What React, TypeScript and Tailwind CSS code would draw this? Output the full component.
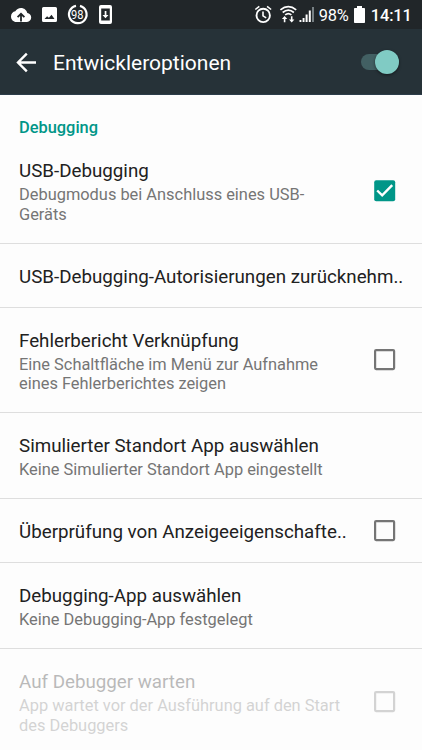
import React from "react";

function CheckBox({ checked = false }: { checked?: boolean }) {
  if (checked) {
    return (
      <svg width="22" height="22" viewBox="0 0 22 22" className="shrink-0">
        <rect x="0.2" y="0.2" width="21" height="21" rx="2" fill="#009688" />
        <path d="M3.2 10.5 L8.2 15.3 L18.2 5.2" fill="none" stroke="#fff" strokeWidth="2.4" />
      </svg>
    );
  }
  return (
    <svg width="22" height="22" viewBox="0 0 22 22" className="shrink-0">
      <rect x="1.1" y="1.1" width="19" height="19" rx="1" fill="none" stroke="#757575" strokeWidth="2.2" />
    </svg>
  );
}

type RowProps = {
  height: string;
  title: string;
  lines?: string[];
  box?: "on" | "off";
  disabled?: boolean;
  last?: boolean;
};

function Row({ height, title, lines = [], box, disabled, last }: RowProps) {
  return (
    <div className={`${height} shrink-0 flex items-center pl-[19px] pr-[26px] ${last ? "" : "border-b border-[#dedede]"}`}>
      <div className={`flex-1 min-w-0 whitespace-nowrap ${disabled ? "opacity-30" : ""} ${lines.length ? "" : "pt-[2px]"}`}>
        <div className="text-[18.75px] leading-[22px] text-[#212121]">{title}</div>
        <div className={lines.length ? "mt-[3px] -mb-[3px]" : ""}>
          {lines.map((l) => (
            <div key={l} className="text-[16.4px] leading-[19.3px] text-[#757575]">{l}</div>
          ))}
        </div>
      </div>
      {box && (
        <div className={disabled ? "opacity-30" : ""}>
          <CheckBox checked={box === "on"} />
        </div>
      )}
    </div>
  );
}

function StatusBar() {
  return (
    <div className="h-[29px] shrink-0 bg-[#212629] flex items-center text-white whitespace-nowrap">
      <svg width="422" height="29" viewBox="0 0 422 29" fill="#fff">
        <path d="M27.3 13.1C26.7 10 24.1 7.9 21 7.9c-2.500 0-4.600 1.300-5.700 3.400C12.900 11.700 11 13.900 11 16.500 11 19.500 13.400 22 16.300 22H27c2.400 0 4.200-2 4.200-4.400 0-2.400-1.700-4.300-3.900-4.500z" />
        <path d="M21 21.500V14.500M17.600 17.200L21 13.800l3.400 3.400" fill="none" stroke="#212629" strokeWidth="1.8" />
        <path fillRule="evenodd" d="M43.500 7h12q1.500 0 1.500 1.500v12q0 1.500-1.500 1.500h-12q-1.500 0-1.500-1.500v-12q0-1.500 1.500-1.500zM44.500 19h10l-3-4.200-2.600 3-1.800-1.600z" />
        <path d="M80 5.900A8.800 8.800 0 1 1 76 5.800" fill="none" stroke="#fff" strokeWidth="2.200" />
        <text x="77.300" y="18.900" fontSize="12.500" textAnchor="middle" textLength="12.500" lengthAdjust="spacingAndGlyphs" fontFamily="Roboto, sans-serif">98</text>
        <path fillRule="evenodd" d="M101 5h9q2 0 2 2v15q0 2-2 2h-9q-2 0-2-2v-15q0-2 2-2zM101.200 8.500v12h8.600v-12z" />
        <path d="M104.700 11h1.700v4h2.100l-3 3.200-3-3.200h2.200z" />
        <circle cx="263.200" cy="15.400" r="6.700" fill="none" stroke="#fff" strokeWidth="1.900" />
        <path d="M255.300 9.500l4-3.200M271.100 9.500l-4-3.200M263 11.400v4.500l3.200 2" fill="none" stroke="#fff" strokeWidth="1.600" />
        <path d="M280.400 9.900Q288.300 3.400 296.200 9.900M282.700 12.500Q288.300 7.900 293.900 12.500M285.200 14.900Q288.300 12.300 291.400 14.900" fill="none" stroke="#fff" strokeWidth="1.700" />
        <path d="M284.600 16l2.700 3h-1.900v3.200h-1.600V19h-1.900zM291.700 22.500l-2.700-3h1.900v-3.200h1.600v3.200h1.900z" />
        <path d="M299.500 20h1.900v2h-1.900zM302.600 18h1.900v4h-1.900zM305.600 14.500h2v7.500h-2zM308.800 10.500h2v11.500h-2z" />
        <path d="M312 7h2v15h-2z" fill="#778084" />
        <path d="M357 6h5v2h2.200q.8 0 .8.800v13.400q0 .8-.8.800h-9.400q-.8 0-.8-.8V8.800q0-.8.800-.8h2.200z" />
        <text x="318.700" y="21" fontSize="16.400" textLength="30" fontFamily="Roboto, sans-serif">98%</text>
        <text x="370.800" y="21" fontSize="16.400" fontWeight="500" textLength="41" fontFamily="Roboto, sans-serif">14:11</text>
      </svg>
    </div>
  );
}

export default function App() {
  return (
    <div className="w-[422px] h-[750px] overflow-hidden bg-[#fdfdfd] flex flex-col font-[Roboto,sans-serif]">
      <StatusBar />
      <header className="h-[66px] shrink-0 bg-[#263238] border-b border-[#2c3d4a] flex items-center pl-[16px] pr-[23px]">
        <svg width="22" height="22" viewBox="0 0 22 22" className="shrink-0" fill="none" stroke="#fff" strokeWidth="2.400">
          <path d="M20 11.500H2.300M10.800 2.700L2 11.500l8.800 8.800" />
        </svg>
        <h1 className="ml-[15px] pt-[2px] flex-1 text-[21px] leading-[28px] text-white whitespace-nowrap">Entwickleroptionen</h1>
        <div className="w-[38px] h-[16px] rounded-full bg-[#426063] flex items-center justify-end">
          <div className="w-[24px] h-[24px] shrink-0 rounded-full bg-[#80cbc4] shadow-[0_1px_3px_rgba(0,0,0,0.5)]" />
        </div>
      </header>
      <div className="h-[43px] shrink-0 pl-[19px] pt-[23px] text-[16.400px] leading-[20px] font-medium text-[#009688]">Debugging</div>
      <Row height="h-[106px]" title="USB-Debugging" lines={["Debugmodus bei Anschluss eines USB-", "Geräts"]} box="on" />
      <Row height="h-[64px]" title="USB-Debugging-Autorisierungen zurücknehm.." />
      <Row height="h-[105px]" title="Fehlerbericht Verknüpfung" lines={["Eine Schaltfläche im Menü zur Aufnahme", "eines Fehlerberichtes zeigen"]} box="off" />
      <Row height="h-[86px]" title="Simulierter Standort App auswählen" lines={["Keine Simulierter Standort App eingestellt"]} />
      <Row height="h-[64px]" title="Überprüfung von Anzeigeeigenschafte.." box="off" />
      <Row height="h-[86px]" title="Debugging-App auswählen" lines={["Keine Debugging-App festgelegt"]} />
      <Row height="h-[105px]" title="Auf Debugger warten" lines={["App wartet vor der Ausführung auf den Start", "des Debuggers"]} box="off" disabled last />
    </div>
  );
}
